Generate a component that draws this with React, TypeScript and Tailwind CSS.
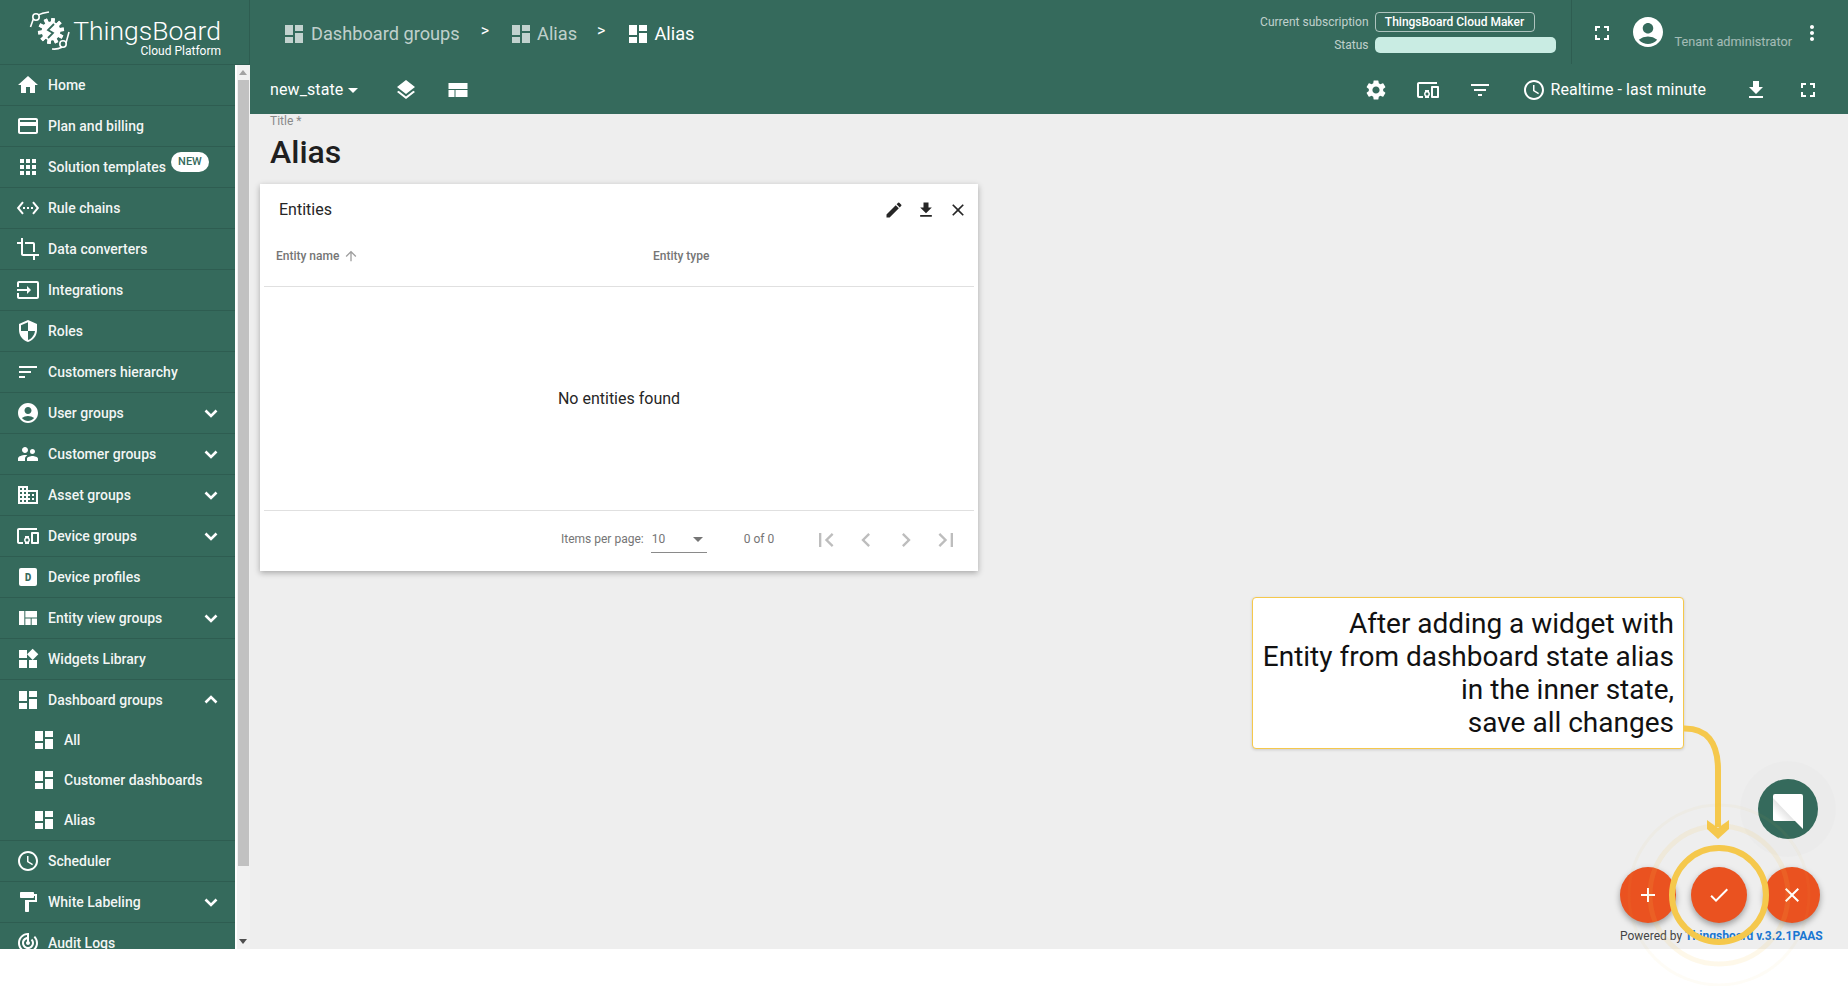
import React from "react";
import {
  MdHome, MdCreditCard, MdApps, MdSettingsEthernet, MdCrop, MdInput, MdSecurity, MdSort,
  MdAccountCircle, MdSupervisorAccount, MdDomain, MdDevicesOther,
  MdDashboard, MdViewQuilt, MdWidgets, MdAccessTime, MdFormatPaint, MdTrackChanges, MdLayers,
  MdSettings, MdFilterList, MdFileDownload, MdFullscreen, MdMoreVert, MdEdit, MdClose, MdAdd,
  MdCheck, MdArrowUpward, MdFirstPage, MdChevronLeft, MdChevronRight, MdLastPage, MdArrowDropDown,
} from "react-icons/md";

const DProfile = () => (
  <span className="flex h-[18px] w-[18px] items-center justify-center rounded-[2px] bg-white text-[11px] leading-none font-bold text-[#356a5c] font-['DejaVu_Sans_Mono',monospace]">D</span>
);

function Chevron({ up }: { up?: boolean }) {
  return (
    <svg width="24" height="24" viewBox="0 0 24 24" className="ml-auto shrink-0">
      <path d={up ? "M6.500 14.500 L12 9 L17.500 14.500" : "M6.500 9.500 L12 15 L17.500 9.500"} fill="none" stroke="#fff" strokeWidth="2.600" />
    </svg>
  );
}

type Item = { label: string; icon: React.ReactNode; chevron?: "down" | "up"; badge?: boolean };
const s = 24;
const items: Item[] = [
  { label: "Home", icon: <MdHome size={s} /> },
  { label: "Plan and billing", icon: <MdCreditCard size={s} /> },
  { label: "Solution templates", icon: <MdApps size={s} />, badge: true },
  { label: "Rule chains", icon: <MdSettingsEthernet size={s} /> },
  { label: "Data converters", icon: <MdCrop size={s} /> },
  { label: "Integrations", icon: <MdInput size={s} /> },
  { label: "Roles", icon: <MdSecurity size={s} /> },
  { label: "Customers hierarchy", icon: <MdSort size={s} /> },
  { label: "User groups", icon: <MdAccountCircle size={s} />, chevron: "down" },
  { label: "Customer groups", icon: <MdSupervisorAccount size={s} />, chevron: "down" },
  { label: "Asset groups", icon: <MdDomain size={s} />, chevron: "down" },
  { label: "Device groups", icon: <MdDevicesOther size={s} />, chevron: "down" },
  { label: "Device profiles", icon: <DProfile /> },
  { label: "Entity view groups", icon: <MdViewQuilt size={s} />, chevron: "down" },
  { label: "Widgets Library", icon: <MdWidgets size={s} /> },
  { label: "Dashboard groups", icon: <MdDashboard size={s} />, chevron: "up" },
];
const after: Item[] = [
  { label: "Scheduler", icon: <MdAccessTime size={s} /> },
  { label: "White Labeling", icon: <MdFormatPaint size={s} />, chevron: "down" },
  { label: "Audit Logs", icon: <MdTrackChanges size={s} /> },
];

function Row({ item }: { item: Item }) {
  return (
    <div className={item.chevron === "up" ? "flex h-[40px] shrink-0 items-center pl-4 pr-3 text-white" : "flex h-[41px] shrink-0 items-center border-b border-[#2e5d51] pl-4 pr-3 text-white"}>
      <span className="flex w-6 shrink-0 items-center justify-center">{item.icon}</span>
      <span className="ml-2 text-[14px] font-medium whitespace-nowrap text-white/95">{item.label}</span>
      {item.badge && (
        <span className="mb-[10px] ml-[5px] flex h-[20px] w-[38px] items-center justify-center rounded-full bg-white text-[11px] font-medium text-[#356a5c]">NEW</span>
      )}
      {item.chevron === "down" && <Chevron />}
      {item.chevron === "up" && <Chevron up />}
    </div>
  );
}

function Logo() {
  const spikes = [10, 46, 82, 118, 154, 190, 226, 262, 298, 334];
  return (
    <svg width="44" height="46" viewBox="28 8 44 46" className="shrink-0">
      <path d="M30.500 27 L33 20 Q35 14 49 12" fill="none" stroke="#fff" strokeWidth="1.6" />
      <circle cx="36" cy="17" r="3.200" fill="#356a5c" stroke="#fff" strokeWidth="1.6" />
      <path d="M52 49 Q62 50 66 43 L69 32" fill="none" stroke="#fff" strokeWidth="1.6" />
      <circle cx="63" cy="44" r="3.200" fill="#356a5c" stroke="#fff" strokeWidth="1.6" />
      {spikes.map((a) => (
        <rect key={a} x="49.200" y="18" width="3.600" height="26" fill="#fff" transform={`rotate(${a} 51 31)`} />
      ))}
      <circle cx="51" cy="31" r="9.500" fill="#fff" />
      <path d="M54 24 L48 30 L53 33 L48 38" fill="none" stroke="#356a5c" strokeWidth="1.8" />
    </svg>
  );
}

function ViewIcon() {
  return (
    <svg width="24" height="24" viewBox="0 0 24 24" fill="#fff">
      <rect x="2.500" y="5" width="19" height="6" />
      <rect x="2.500" y="12" width="6" height="7" />
      <rect x="9.500" y="12" width="12" height="7" />
    </svg>
  );
}

function ChatIcon() {
  return (
    <svg width="30" height="35" viewBox="0 0 30 35" className="mt-[4px]">
      <defs>
        <linearGradient id="fold" x1="0.62" y1="0.38" x2="0.2" y2="0.8">
          <stop offset="0" stopColor="#dadada" />
          <stop offset="1" stopColor="#ffffff" />
        </linearGradient>
      </defs>
      <path d="M0 2 Q0 0 2 0 H28 Q30 0 30 2 V35 L22 27 H2 Q0 27 0 25 Z" fill="#fff" />
      <path d="M0 4 L22 27 H2 Q0 27 0 25 Z" fill="url(#fold)" />
    </svg>
  );
}

export default function App() {
  return (
    <div className="relative h-[986px] w-[1848px] overflow-hidden bg-white font-['Roboto',sans-serif]">
      <div className="flex h-[949px]">
        {/* Sidebar */}
        <aside className="flex h-full w-[250px] shrink-0 flex-col bg-[#356a5c]">
          <div className="flex h-[65px] shrink-0 items-start border-r border-b border-[#2e5d51] pl-[28px] pt-[8px] text-white">
            <Logo />
            <div className="flex w-[149px] flex-col items-end">
              <span className="mt-[10px] text-[26.500px] leading-[26px] font-light whitespace-nowrap">ThingsBoard</span>
              <span className="text-[12px] leading-[14px] font-normal whitespace-nowrap">Cloud Platform</span>
            </div>
          </div>
          <div className="flex min-h-0 flex-1">
            <nav className="flex min-w-0 flex-1 flex-col overflow-hidden">
              {items.map((it) => (
                <Row key={it.label} item={it} />
              ))}
              <div className="flex shrink-0 flex-col border-b border-[#2e5d51]">
                {["All", "Customer dashboards", "Alias"].map((l) => (
                  <div key={l} className="flex h-10 items-center pl-[32px] text-white">
                    <MdDashboard size={24} />
                    <span className="ml-[8px] text-[14px] font-medium text-white/95">{l}</span>
                  </div>
                ))}
              </div>
              {after.map((it) => (
                <Row key={it.label} item={it} />
              ))}
            </nav>
            <div className="flex w-[15px] shrink-0 flex-col items-center border-l-2 border-white bg-[#f1f1f1] pr-[1px]">
              <span className="mt-[5px] h-0 w-0 border-x-[4px] border-b-[5px] border-x-transparent border-b-[#a3a3a3]" />
              <span className="mt-[5px] h-[786px] w-[11px] bg-[#c1c1c1]" />
              <span className="mt-auto mb-[5px] h-0 w-0 border-x-[4px] border-t-[5px] border-x-transparent border-t-[#505050]" />
            </div>
          </div>
        </aside>

        {/* Main */}
        <main className="flex min-w-0 flex-1 flex-col bg-[#eeeeee]">
          <header className="h-[114px] shrink-0 bg-[#356a5c] text-white">
            <div className="flex h-[65px] items-start">
              <div className="flex items-center pt-[19px] pl-[32px] text-[18.200px] leading-[24px]">
                <MdDashboard size={24} className="text-white/70" />
                <span className="ml-[5px] text-white/70">Dashboard groups</span>
                <span className="mb-[5px] ml-[21px] text-[16px] text-white">&gt;</span>
                <MdDashboard size={24} className="ml-[20px] text-white/70" />
                <span className="ml-[4px] text-white/70">Alias</span>
                <span className="mb-[5px] ml-[20px] text-[16px] text-white">&gt;</span>
                <MdDashboard size={24} className="ml-[21px]" />
                <span className="ml-[4px] text-white">Alias</span>
              </div>
              <div className="ml-auto grid grid-cols-[auto_181px] gap-x-[6px] pt-[12px] text-[12px] text-white/70">
                <span className="self-center text-right leading-[20px]">Current subscription</span>
                <span className="flex h-[20px] w-[160px] items-center justify-center rounded-[4px] border border-white/60 text-[12px] font-medium text-white">ThingsBoard Cloud Maker</span>
                <span className="mt-[5px] self-center text-right leading-[16px]">Status</span>
                <span className="mt-[5px] h-[16px] rounded-[5px] bg-[#c9ece3]" />
              </div>
              <div className="mr-[24px] ml-[15px] flex h-[64px] items-start border-l border-[#2e5d51]">
                <MdFullscreen size={24} className="mt-[21px] ml-[18px]" />
                <MdAccountCircle size={36} className="mt-[14px] ml-[16px]" />
                <span className="mt-[34px] ml-[9px] text-[12.700px] leading-[16px] whitespace-nowrap text-white/55">Tenant administrator</span>
                <MdMoreVert size={24} className="mt-[21px] ml-[8px]" />
              </div>
            </div>
            <div className="flex h-[49px] items-center pt-[1px]">
              <span className="ml-[20px] text-[16px] tracking-[0.1px]">new_state</span>
              <MdArrowDropDown size={24} className="-ml-[2px]" />
              <MdLayers size={24} className="ml-[29px]" />
              <span className="ml-[28px]"><ViewIcon /></span>
              <div className="ml-auto flex items-center">
                <MdSettings size={24} />
                <MdDevicesOther size={24} className="ml-[28px]" />
                <MdFilterList size={24} className="ml-[28px]" />
                <MdAccessTime size={24} className="ml-[30px]" />
                <span className="ml-[5px] text-[16px] tracking-[0.05px] whitespace-nowrap">Realtime - last minute</span>
                <MdFileDownload size={24} className="ml-[38px]" />
                <MdFullscreen size={24} className="mr-[28px] ml-[28px]" />
              </div>
            </div>
          </header>

          <div className="flex flex-1 flex-col pl-[10px]">
            <div className="pl-[10px]">
              <div className="text-[12px] leading-[14px] text-[#8a8a8a]">Title *</div>
              <div className="mt-[5px] text-[32px] leading-[38px] font-medium text-[#1f1f1f]">Alias</div>
            </div>
            <section className="mt-[13px] flex h-[387px] w-[718px] flex-col bg-white px-[4px] shadow-[0_2px_6px_rgba(0,0,0,0.3)]">
              <div className="flex h-[52px] shrink-0 items-center pl-[15px] pr-[6px]">
                <span className="text-[16px] text-[#262626]">Entities</span>
                <MdEdit size={20} className="ml-auto text-[#262626]" />
                <MdFileDownload size={20} className="ml-[12px] text-[#262626]" />
                <MdClose size={20} className="ml-[12px] text-[#262626]" />
              </div>
              <div className="flex h-[51px] shrink-0 items-center border-b border-[#e0e0e0] pb-[11px] pl-[12px] text-[12px] font-medium text-[#757575]">
                <span className="flex w-[377px] items-center">Entity name<MdArrowUpward size={16} className="ml-[4px] text-[#9e9e9e]" /></span>
                <span>Entity type</span>
              </div>
              <div className="flex h-[223px] shrink-0 items-center justify-center text-[16px] text-[#262626]">No entities found</div>
              <div className="flex flex-1 items-center border-t border-[#e0e0e0] pb-[5px] pl-[297px] text-[12px] text-[#757575]">
                <span>Items per page:</span>
                <span className="mt-[3px] ml-[7px] flex h-[26px] w-[56px] items-center justify-between border-b border-[#8a8a8a] pb-[1px] pl-[1px]">10<span className="mr-[4px] h-0 w-0 border-x-[5px] border-t-[5px] border-x-transparent border-t-[#757575]" /></span>
                <span className="ml-[37px]">0 of 0</span>
                <MdFirstPage size={28} className="mt-[2px] ml-[38px] text-[#bdbdbd]" />
                <MdChevronLeft size={28} className="mt-[2px] ml-[12px] text-[#bdbdbd]" />
                <MdChevronRight size={28} className="mt-[2px] ml-[12px] text-[#bdbdbd]" />
                <MdLastPage size={28} className="mt-[2px] ml-[12px] text-[#bdbdbd]" />
              </div>
            </section>
          </div>
        </main>
      </div>

      {/* Overlays */}
      <div className="absolute top-[597px] left-[1252px] flex h-[152px] w-[432px] flex-col justify-center rounded-[4px] border border-[#f5c84c] bg-white pr-[9px] text-right text-[28px] leading-[33px] text-[#111] shadow-[0_1px_3px_rgba(0,0,0,0.15)]">
        <span>After adding a widget with</span>
        <span>Entity from dashboard state alias</span>
        <span>in the inner state,</span>
        <span>save all changes</span>
      </div>

      <div className="absolute top-[779px] left-[1758px] flex h-[60px] w-[60px] items-center justify-center rounded-full bg-[#356a5c] shadow-[0_0_0_18px_rgba(0,0,0,0.012)]">
        <ChatIcon />
      </div>

      <div className="absolute top-[867px] left-[1620px] flex h-[56px] w-[56px] items-center justify-center rounded-full bg-[#ea5220] text-white shadow-[0_3px_6px_rgba(0,0,0,0.35)]"><MdAdd size={24} /></div>
      <div className="absolute top-[867px] left-[1764px] flex h-[56px] w-[56px] items-center justify-center rounded-full bg-[#ea5220] text-white shadow-[0_3px_6px_rgba(0,0,0,0.35)]"><MdClose size={24} /></div>
      <div className="absolute top-[867px] left-[1691px] flex h-[56px] w-[56px] items-center justify-center rounded-full bg-[#ea5220] text-white shadow-[0_3px_6px_rgba(0,0,0,0.35)]"><MdCheck size={24} /></div>

      <div className="absolute top-[929px] left-[1620px] text-[12px] leading-[14px] whitespace-nowrap text-[#444]">
        Powered by <span className="font-bold text-[#1976d2]">Thingsboard v.3.2.1PAAS</span>
      </div>

      <svg width="260" height="330" viewBox="0 0 260 330" className="pointer-events-none absolute top-[725px] left-[1589px]">
        <path d="M95 3.500 Q129 3 129 45 V102" fill="none" stroke="#f5c84c" strokeWidth="6" />
        <path d="M118 95 L129 103 L140 95 V104 L129 114 L118 104 Z" fill="#f5c84c" />
        <circle cx="130" cy="170" r="69" fill="none" stroke="#f5c84c" strokeOpacity="0.12" strokeWidth="5" />
        <circle cx="130" cy="170" r="90" fill="none" stroke="#f5c84c" strokeOpacity="0.05" strokeWidth="3" />
        <circle cx="130" cy="170" r="47" fill="none" stroke="#f5c84c" strokeWidth="6" />
      </svg>
    </div>
  );
}
